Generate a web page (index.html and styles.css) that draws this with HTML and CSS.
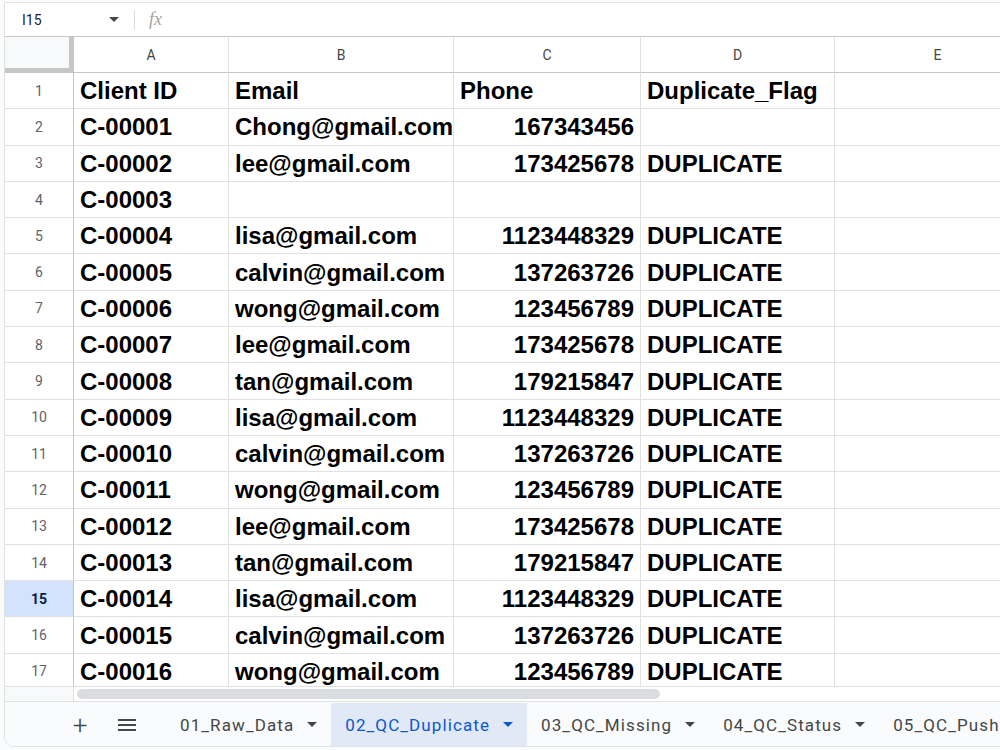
FILE: index.html
```html
<!DOCTYPE html>
<html lang="en">

<head>
    <meta charset="UTF-8">
    <title>QC Sheet</title>
    <link rel="stylesheet" href="styles.css">
</head>

<body>
    <div class="sheet-window">
        <!-- name box + formula input -->
        <div class="formula-bar">
            <div class="name-box">I15</div>
            <span class="caret"></span>
            <span class="divider"></span>
            <span class="fx">fx</span>
        </div>

        <div class="grid-area">
            <div class="grid" id="grid">
                <div class="corner"></div>
                <div class="col-head">A</div>
                <div class="col-head">B</div>
                <div class="col-head">C</div>
                <div class="col-head">D</div>
                <div class="col-head">E</div>
            </div>
        </div>

        <div class="hscroll">
            <div class="hscroll-gutter"></div>
            <div class="hscroll-track"><div class="thumb"></div></div>
        </div>

        <div class="tab-bar">
            <div class="icon-btn add">+</div>
            <div class="icon-btn menu">
                <svg width="18" height="14" viewBox="0 0 18 14"><path d="M0 2h18M0 7h18M0 12h18" stroke="#444746" stroke-width="2"/></svg>
            </div>
            <div class="tab">01_Raw_Data<span class="tab-arrow"></span></div>
            <div class="tab active">02_QC_Duplicate<span class="tab-arrow"></span></div>
            <div class="tab">03_QC_Missing<span class="tab-arrow"></span></div>
            <div class="tab">04_QC_Status<span class="tab-arrow"></span></div>
            <div class="tab">05_QC_Push<span class="tab-arrow"></span></div>
        </div>
    </div>

    <script>
        const rows = [
            ["Client ID", "Email", "Phone", "Duplicate_Flag"],
            ["C-00001", "Chong@gmail.com", "167343456", ""],
            ["C-00002", "lee@gmail.com", "173425678", "DUPLICATE"],
            ["C-00003", "", "", ""],
            ["C-00004", "lisa@gmail.com", "1123448329", "DUPLICATE"],
            ["C-00005", "calvin@gmail.com", "137263726", "DUPLICATE"],
            ["C-00006", "wong@gmail.com", "123456789", "DUPLICATE"],
            ["C-00007", "lee@gmail.com", "173425678", "DUPLICATE"],
            ["C-00008", "tan@gmail.com", "179215847", "DUPLICATE"],
            ["C-00009", "lisa@gmail.com", "1123448329", "DUPLICATE"],
            ["C-00010", "calvin@gmail.com", "137263726", "DUPLICATE"],
            ["C-00011", "wong@gmail.com", "123456789", "DUPLICATE"],
            ["C-00012", "lee@gmail.com", "173425678", "DUPLICATE"],
            ["C-00013", "tan@gmail.com", "179215847", "DUPLICATE"],
            ["C-00014", "lisa@gmail.com", "1123448329", "DUPLICATE"],
            ["C-00015", "calvin@gmail.com", "137263726", "DUPLICATE"],
            ["C-00016", "wong@gmail.com", "123456789", "DUPLICATE"]
        ];
        const activeRow = 15;

        const grid = document.getElementById("grid");
        rows.forEach((row, i) => {
            const num = document.createElement("div");
            num.className = "row-head" + (i + 1 === activeRow ? " selected" : "");
            num.textContent = i + 1;
            grid.appendChild(num);

            row.concat([""]).forEach((value, c) => {
                const cell = document.createElement("div");
                cell.className = "cell";
                // phone numbers sit on the right like real numbers
                if (c === 2 && i > 0) cell.classList.add("num");
                cell.textContent = value;
                grid.appendChild(cell);
            });
        });
    </script>
</body>

</html>
```

FILE: styles.css
```css
body {
    margin: 0;
    background: #f9fbfd;
    overflow: hidden;
    font-family: Roboto, "Liberation Sans", sans-serif;
}

.sheet-window {
    margin: 2px 0 0 4px;
    width: 1010px;
    height: 745px;
    background: white;
    border: 1px solid #e1e3e1;
    border-radius: 0 0 0 10px;
    box-sizing: border-box;
    display: flex;
    flex-direction: column;
    overflow: hidden;
}

/* formula bar */
.formula-bar {
    height: 33px;
    flex-shrink: 0;
    display: flex;
    align-items: center;
    border-bottom: 1px solid #c4c7c5;
    color: #1f1f1f;
}

.name-box {
    width: 80px;
    padding-left: 17px;
    font-size: 14px;
}

.caret {
    width: 0;
    height: 0;
    border-left: 5px solid transparent;
    border-right: 5px solid transparent;
    border-top: 5px solid #444746;
    margin-left: 7px;
}

.divider {
    width: 1px;
    height: 20px;
    background: #dadce0;
    margin-left: 15px;
}

.fx {
    margin-left: 14px;
    font-family: "Liberation Serif", serif;
    font-style: italic;
    font-size: 18px;
    color: #a3a3a3;
}

/* cells */
.grid-area {
    height: 649px;
    flex-shrink: 0;
    overflow: hidden;
}

.grid {
    display: grid;
    grid-template-columns: 69px 155px 225px 187px 194px 206px;
    grid-template-rows: 36px;
    grid-auto-rows: 36.3px;
}

.corner {
    background: #f8f9fa;
    border-right: 5px solid #c4c7c5;
    border-bottom: 5px solid #c4c7c5;
}

.col-head {
    display: flex;
    align-items: center;
    justify-content: center;
    font-size: 14px;
    color: #444746;
    border-right: 1px solid #e1e1e1;
    border-bottom: 1px solid #c4c7c5;
}

.row-head {
    display: flex;
    align-items: center;
    justify-content: center;
    font-size: 14px;
    color: #5f6368;
    border-right: 1px solid #c4c7c5;
    border-bottom: 1px solid #e1e1e1;
}

.row-head.selected {
    background: #d3e3fd;
    color: #041e49;
    font-weight: bold;
}

.cell {
    display: flex;
    align-items: center;
    padding: 1px 6px 0;
    font-family: "Liberation Sans", Arial, sans-serif;
    font-weight: bold;
    font-size: 24px;
    color: black;
    white-space: nowrap;
    overflow: hidden;
    border-right: 1px solid #e1e1e1;
    border-bottom: 1px solid #e1e1e1;
}

.cell.num {
    justify-content: flex-end;
}

/* horizontal scrollbar */
.hscroll {
    height: 14px;
    flex-shrink: 0;
    display: flex;
    border-top: 1px solid #e1e1e1;
}

.hscroll-gutter {
    width: 68px;
    background: #f8f9fa;
    border-right: 1px solid #e1e1e1;
}

.hscroll-track {
    flex: 1;
    padding: 2px 3px;
}

.thumb {
    width: 583px;
    height: 10px;
    border-radius: 5px;
    background: #dadce0;
}

/* sheet tabs */
.tab-bar {
    flex: 1;
    display: flex;
    align-items: stretch;
    background: #f9fbfd;
    border-top: 1px solid #e1e3e1;
    padding-left: 57px;
    padding-top: 1px;
}

.icon-btn {
    width: 36px;
    flex-shrink: 0;
    font-size: 26px;
    font-weight: 300;
    color: #444746;
    display: flex;
    align-items: center;
    justify-content: center;
}

.icon-btn.menu {
    margin-left: 11px;
    margin-right: 21px;
}

.tab {
    flex-shrink: 0;
    display: flex;
    align-items: center;
    padding: 0 14px;
    font-size: 17px;
    letter-spacing: 1.1px;
    color: #444746;
    white-space: nowrap;
}

.tab-arrow {
    width: 0;
    height: 0;
    border-left: 5px solid transparent;
    border-right: 5px solid transparent;
    border-top: 5px solid #444746;
    margin-left: 13px;
}

.tab.active {
    background: #e1e9f7;
    color: #0b57d0;
}

.tab.active .tab-arrow {
    border-top-color: #0b57d0;
}
```
